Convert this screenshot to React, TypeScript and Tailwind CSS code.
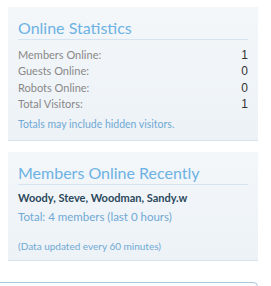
export default function App() {
  const stats = [
    { label: 'Members Online:', value: 1 },
    { label: 'Guests Online:', value: 0 },
    { label: 'Robots Online:', value: 0 },
    { label: 'Total Visitors:', value: 1 },
  ]

  return (
    <div
      className="w-[271px] h-[286px] overflow-hidden bg-white"
      style={{ fontFamily: 'Lato, "Open Sans", sans-serif' }}
    >
      <div className="flex flex-col pt-[7px]">
        {/* Online Statistics */}
        <div className="ml-[8px] w-[250px] h-[134px] px-[10px] pt-[10px] border-b border-[#d7e3ef] bg-gradient-to-b from-[#f3f7fa] to-[#edf2f7]">
          <h3 className="text-[16px] leading-[22px] text-[#6cb2e4] border-b border-[#d7e3ef]">
            Online Statistics
          </h3>
          <div className="mt-[7px] flex flex-col text-[11px]">
            {stats.map((s) => (
              <div key={s.label} className="flex justify-between h-[16.3px] items-center">
                <span className="text-[#888888]">{s.label}</span>
                <span
                  className="text-[12px] text-[#333333]"
                  style={{ fontFamily: '"Liberation Sans", Arial, sans-serif' }}
                >
                  {s.value}
                </span>
              </div>
            ))}
          </div>
          <p className="mt-[5px] text-[10.5px] text-[#6fa9d4]">Totals may include hidden visitors.</p>
        </div>

        {/* Members Online Recently */}
        <div className="mt-[11px] ml-[8px] w-[250px] h-[109px] px-[10px] pt-[10px] border-b border-[#d7e3ef] bg-gradient-to-b from-[#f3f7fa] to-[#edf2f7]">
          <h3 className="text-[16px] leading-[22px] text-[#6cb2e4] border-b border-[#d7e3ef]">
            Members Online Recently
          </h3>
          <div className="mt-[5px] text-[11px] leading-[16px] font-bold text-[#2b485c]">
            Woody, Steve, Woodman, Sandy.w
          </div>
          <div className="mt-[3px] text-[11.5px] leading-[16px] text-[#6fa9d4]">Total: 4 members (last 0 hours)</div>
          <div className="mt-[14px] text-[10px] leading-[14px] text-[#6fa9d4]">(Data updated every 60 minutes)</div>
        </div>

        {/* next block edge */}
        <div className="mt-[21px] w-[258px] h-[20px] border-t border-r border-[#a9c8e0] rounded-tr-[5px] bg-[#fbfdfe]" />
      </div>
    </div>
  )
}
